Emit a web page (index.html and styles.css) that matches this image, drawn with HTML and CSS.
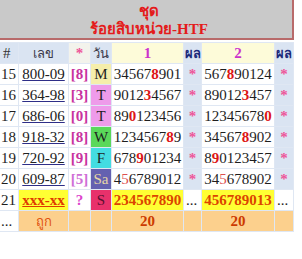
FILE: index.html
```html
<!DOCTYPE html>
<html lang="th">
<head>
<meta charset="utf-8">
<title>ร้อยสิบหน่วย-HTF</title>
<link rel="stylesheet" href="styles.css">
</head>
<body>
<div class="page">
  <div class="banner">
    <div class="bl">ชุด</div>
    <div class="bl">ร้อยสิบหน่วย-HTF</div>
  </div>
  <table class="grid">
    <colgroup>
      <col class="c-n"><col class="c-num"><col class="c-k"><col class="c-d"><col class="c-r"><col class="c-s"><col class="c-r2"><col class="c-s2">
    </colgroup>
    <thead>
      <tr>
        <th class="h-blue h-hash">#</th>
        <th class="h-blue th-thai">เลข</th>
        <th class="h-key"><span class="star">*</span></th>
        <th class="h-blue th-thai">วัน</th>
        <th class="h-yel"><span class="hnum">1</span></th>
        <th class="h-blue th-res">ผล</th>
        <th class="h-yel"><span class="hnum">2</span></th>
        <th class="h-blue th-res">ผล</th>
      </tr>
    </thead>
    <tbody>
      <tr>
        <td class="n">15</td><td><a class="lnk" href="#">800-09</a></td><td><span class="key">[8]</span></td><td class="d-m">M</td>
        <td>34567<b class="hit">8</b>901</td><td class="res"><span class="star">*</span></td>
        <td>567<b class="hit">8</b>90124</td><td class="res"><span class="star">*</span></td>
      </tr>
      <tr>
        <td class="n">16</td><td><a class="lnk" href="#">364-98</a></td><td><span class="key">[3]</span></td><td class="d-t">T</td>
        <td>9012<b class="hit">3</b>4567</td><td class="res"><span class="star">*</span></td>
        <td>89012<b class="hit">3</b>457</td><td class="res"><span class="star">*</span></td>
      </tr>
      <tr>
        <td class="n">17</td><td><a class="lnk" href="#">686-06</a></td><td><span class="key">[0]</span></td><td class="d-t">T</td>
        <td>89<b class="hit">0</b>123456</td><td class="res"><span class="star">*</span></td>
        <td>12345678<b class="hit">0</b></td><td class="res"><span class="star">*</span></td>
      </tr>
      <tr>
        <td class="n">18</td><td><a class="lnk" href="#">918-32</a></td><td><span class="key">[8]</span></td><td class="d-w">W</td>
        <td>1234567<b class="hit">8</b>9</td><td class="res"><span class="star">*</span></td>
        <td>34567<b class="hit">8</b>902</td><td class="res"><span class="star">*</span></td>
      </tr>
      <tr>
        <td class="n">19</td><td><a class="lnk" href="#">720-92</a></td><td><span class="key">[9]</span></td><td class="d-f">F</td>
        <td>678<b class="hit">9</b>01234</td><td class="res"><span class="star">*</span></td>
        <td>8<b class="hit">9</b>0123457</td><td class="res"><span class="star">*</span></td>
      </tr>
      <tr>
        <td class="n">20</td><td><a class="lnk" href="#">609-87</a></td><td><span class="key key-soft">[5]</span></td><td class="d-sa">Sa</td>
        <td>4<span class="hit-soft">5</span>6789012</td><td class="res"><span class="star">*</span></td>
        <td>34<span class="hit-soft">5</span>678902</td><td class="res"><span class="star">*</span></td>
      </tr>
      <tr class="now">
        <td class="n">21</td><td class="yel"><a class="lnk-x" href="#">xxx-xx</a></td><td><span class="q">?</span></td><td class="d-s">S</td>
        <td class="yel"><b class="pred">234567890</b></td><td class="dots">...</td>
        <td class="yel"><b class="pred">456789013</b></td><td class="dots">...</td>
      </tr>
    </tbody>
    <tfoot>
      <tr class="sum">
        <td class="dots n">...</td><td class="ok">ถูก</td><td></td><td></td>
        <td><b class="cnt">20</b></td><td></td>
        <td><b class="cnt">20</b></td><td></td>
      </tr>
    </tfoot>
  </table>
</div>
</body>
</html>
```
FILE: styles.css
```css
html, body {
  margin: 0;
  padding: 0;
  background: #ffffff;
}

.page {
  margin: -4px 0 0 -2px;
  width: 296px;
  font-family: "Liberation Serif", "Times New Roman", serif;
  font-size: 15px;
  color: #1e1e1e;
}

.banner {
  background: #c9c9c9;
  border: 2px solid #b86a6a;
  text-align: center;
  color: #e41b1b;
  font-weight: bold;
  font-size: 15px;
  padding: 4px 0 0 6px;
}

.bl {
  height: 18px;
  line-height: 18px;
  white-space: nowrap;
}

.grid {
  margin-top: 2px;
  width: 296px;
  table-layout: fixed;
  border-collapse: separate;
  border-spacing: 1px;
  background: #dfe7f3;
}

.c-n { width: 19px; }
.c-num { width: 49px; }
.c-k { width: 21px; }
.c-d { width: 20px; }
.c-r { width: 71px; }
.c-s { width: 17px; }
.c-r2 { width: 72px; }
.c-s2 { width: 18px; }

.grid th,
.grid td {
  height: 20px;
  padding: 0;
  text-align: center;
  vertical-align: middle;
  white-space: nowrap;
  overflow: hidden;
  line-height: 18px;
  background: #ffffff;
}

.grid th {
  font-weight: normal;
}

.h-blue { background: #dae4f2 !important; }
.h-key { background: #f3f3ec !important; }
.h-yel { background: #fdfbd9 !important; }

.h-hash {
  text-align: left !important;
  padding-left: 4px !important;
  color: #333;
}

.th-thai {
  font-family: "Noto Sans", "DejaVu Sans", sans-serif;
  font-size: 13px;
  color: #3a3a4a;
}

.th-res {
  font-family: "Noto Sans", "DejaVu Sans", sans-serif;
  font-size: 13px;
  font-weight: bold !important;
  color: #1c2a7a;
}

.hnum {
  color: #cc33cc;
  font-weight: bold;
}

.star {
  color: #ee5599;
  font-weight: bold;
}

.n {
  text-align: left !important;
  padding-left: 2px !important;
}

.lnk {
  color: #222222;
  text-decoration: underline;
  text-decoration-color: #2e2e88;
}

.key {
  color: #c8329e;
  font-weight: bold;
}

.key-soft {
  color: #cf6fd6;
}

.hit {
  color: #dd1616;
}

.hit-soft {
  color: #dd5050;
}

.grid td.d-m { background: #f5eeab; }
.grid td.d-t { background: #ee9bea; }
.grid td.d-w { background: #5ad85a; }
.grid td.d-f { background: #44dde2; }
.grid td.d-sa { background: #6461b0; color: #e6d6a6; }
.grid td.d-s { background: #e8316b; color: #5a1030; }

.grid td.res { background: #dae4f2; }

.grid td.yel { background: #ffff33; }

.lnk-x {
  color: #e03a00;
  font-weight: bold;
  text-decoration: underline;
}

.pred {
  color: #dc4400;
}

.q {
  color: #dd44cc;
  font-weight: bold;
}

.grid td.dots {
  background: #ffffff;
  text-align: left;
  padding-left: 2px;
}

.sum td {
  background: #fcd08d;
}

.ok {
  font-family: "Noto Sans", "DejaVu Sans", sans-serif;
  font-size: 13px;
  color: #e0500f;
}

.cnt {
  color: #cc3a00;
}
```
